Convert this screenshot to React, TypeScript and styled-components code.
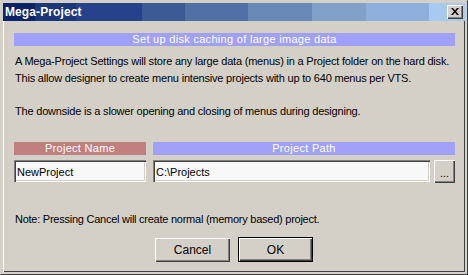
import styled, { createGlobalStyle } from "styled-components"

const GlobalStyle = createGlobalStyle`
    html, body {
        margin: 0;
        padding: 0;
        background: #d4d0c8;
    }
    * {
        box-sizing: border-box;
    }
`

const face = "#d4d0c8"

const Window = styled.div`
    width: 468px;
    height: 275px;
    background: ${face};
    border: 3px solid ${face};
    box-shadow: inset 1px 1px 0 #ffffff, inset -1px -1px 0 #404040;
    position: relative;
    display: flex;
    flex-direction: column;
    font-family: "Liberation Sans", Arial, sans-serif;
    font-size: 11px;
    color: #000;
    &::before {
        content: "";
        position: absolute;
        inset: -3px;
        border-right: 1px solid #404040;
        border-bottom: 1px solid #404040;
        border-top: 1px solid ${face};
        border-left: 1px solid ${face};
        pointer-events: none;
    }
`

const TitleBar = styled.div`
    height: 18px;
    flex: none;
    display: flex;
    align-items: center;
    justify-content: space-between;
    padding: 0 2px 0 2px;
    background: linear-gradient(
        to right,
        #0a246a 0px, #0a246a 32px,
        #1b3679 32px, #1b3679 73px,
        #25428a 73px, #25428a 139px,
        #3c5a96 139px, #3c5a96 182px,
        #5070a6 182px, #5070a6 245px,
        #6888b6 245px, #6888b6 309px,
        #80a0c8 309px, #80a0c8 363px,
        #8eaedc 363px, #8eaedc 426px,
        #a6caf0 426px
    );
`

const Title = styled.span`
    color: #fff;
    font-weight: bold;
    font-size: 12px;
    letter-spacing: 0.1px;
`

const CloseButton = styled.button`
    width: 16px;
    height: 14px;
    padding: 0;
    margin: 0;
    border: none;
    background: ${face};
    box-shadow: inset 1px 1px 0 #ffffff, inset -1px -1px 0 #404040, inset -2px -2px 0 #808080;
    display: flex;
    align-items: center;
    justify-content: center;
    svg { display: block; margin: -1px 0 0 -1px; }
`

const Body = styled.div`
    flex: 1;
    display: flex;
    flex-direction: column;
    padding: 12px 10px 0 11px;
`

const Band = styled.div<{ $tone: "blue" | "red" }>`
    height: 13px;
    flex: none;
    background: ${p => (p.$tone === "red" ? "#c08080" : "#a0a0f8")};
    color: #fff;
    font-size: 11px;
    line-height: 13px;
    text-align: center;
    letter-spacing: 0.3px;
`

const Paragraph = styled.p`
    margin: 7px 0 0 1px;
    font-size: 11px;
    line-height: 16.5px;
    letter-spacing: -0.2px;
    white-space: nowrap;
`

const FieldRow = styled.div`
    display: grid;
    grid-template-columns: 132px 1fr;
    column-gap: 7px;
    row-gap: 5px;
    margin-top: 23px;
`

const PathBox = styled.div`
    display: flex;
    gap: 4px;
    height: 22px;
`

const Input = styled.input`
    height: 22px;
    width: 100%;
    min-width: 0;
    background: #f8f8f8;
    border: none;
    box-shadow: inset 1px 1px 0 #808080, inset 2px 2px 0 #404040, inset -1px -1px 0 #ffffff, inset -2px -2px 0 ${face};
    padding: 1px 4px 0 3px;
    font-family: "Liberation Sans", Arial, sans-serif;
    font-size: 11px;
    color: #000;
    outline: none;
`

const SmallButton = styled.button`
    width: 21px;
    flex: none;
    height: 23px;
    padding: 2px 0 0;
    border: none;
    background: ${face};
    box-shadow: inset 1px 1px 0 #ffffff, inset -1px -1px 0 #404040, inset -2px -2px 0 #808080;
    font-family: "Liberation Sans", Arial, sans-serif;
    font-size: 11px;
    color: #000;
`

const Note = styled.p`
    margin: 30px 0 0 1px;
    font-size: 11px;
    line-height: 14px;
    letter-spacing: -0.25px;
    white-space: nowrap;
`

const ButtonRow = styled.div`
    display: flex;
    justify-content: center;
    align-items: flex-start;
    gap: 8px;
    margin-top: 12px;
    padding-right: 1px;
`

const DialogButton = styled.button<{ $default?: boolean }>`
    width: 75px;
    height: ${p => (p.$default ? "25px" : "24px")};
    margin-top: ${p => (p.$default ? "-1px" : "0")};
    padding: 0;
    border: ${p => (p.$default ? "1px solid #000" : "none")};
    background: ${face};
    box-shadow: inset 1px 1px 0 #ffffff, inset -1px -1px 0 #404040, inset -2px -2px 0 #808080;
    font-family: "Liberation Sans", Arial, sans-serif;
    font-size: 12px;
    color: #000;
`

export default function App() {
    return (
        <>
            <GlobalStyle />
            <Window>
                <TitleBar>
                    <Title>Mega-Project</Title>
                    <CloseButton aria-label="Close">
                        <svg width="8" height="7" viewBox="0 0 8 7">
                            <path d="M0 0h2l2 2.5L6 0h2L5 3.5 8 7H6L4 4.5 2 7H0l3-3.5z" fill="#000" />
                        </svg>
                    </CloseButton>
                </TitleBar>
                <Body>
                    <Band $tone="blue">Set up disk caching of large image data</Band>
                    <Paragraph>
                        A Mega-Project Settings will store any large data (menus) in a Project folder on the hard disk.
                        <br />
                        This allow designer to create menu intensive projects with up to 640 menus per VTS.
                        <br />
                        <br />
                        The downside is a slower opening and closing of menus during designing.
                    </Paragraph>
                    <FieldRow>
                        <Band $tone="red">Project Name</Band>
                        <Band $tone="blue">Project Path</Band>
                        <Input defaultValue="NewProject" />
                        <PathBox>
                            <Input defaultValue="C:\Projects" />
                            <SmallButton>...</SmallButton>
                        </PathBox>
                    </FieldRow>
                    <Note>Note: Pressing Cancel will create normal (memory based) project.</Note>
                    <ButtonRow>
                        <DialogButton>Cancel</DialogButton>
                        <DialogButton $default>OK</DialogButton>
                    </ButtonRow>
                </Body>
            </Window>
        </>
    )
}
